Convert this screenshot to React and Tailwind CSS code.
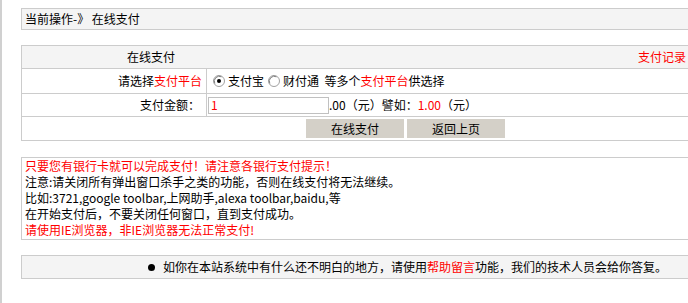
const font = { fontFamily: '"Noto Sans CJK SC", "Liberation Sans", sans-serif' };

function Radio({ checked }) {
  return (
    <svg width="12" height="12" viewBox="0 0 12 12" className="shrink-0">
      <circle cx="6" cy="6" r="5.5" fill="#fff" stroke="#a0a0a0" />
      <path d="M1.8 8.5 A5 5 0 0 1 8.5 1.8" fill="none" stroke="#808080" strokeWidth="1" />
      {checked && <circle cx="6" cy="6" r="2" fill="#000" />}
    </svg>
  );
}

const Red = ({ children }) => <span className="text-[#ff0000]">{children}</span>;

export default function App() {
  return (
    <div className="w-[688px] h-[303px] overflow-hidden bg-white text-[12px] leading-[16px] text-black border-l-2 border-[#d0d0d0]" style={font}>
      <div className="pl-[19px] pt-[8px] w-[720px]">
        {/* current location */}
        <div className="w-[690px] h-[22px] border border-[#cccccc] bg-[#f4f4f4] flex items-center pl-[3px]">
          当前操作-》 在线支付
        </div>

        {/* payment table */}
        <div className="mt-[15px] w-[672px] border border-[#cccccc]">
          <div className="h-[23px] bg-[#f4f4f4] border-b border-[#cccccc] flex items-center">
            <div className="pl-[105px] flex-1">在线支付</div>
            <div className="pr-[6px]"><Red>支付记录</Red></div>
          </div>
          <div className="h-[25px] border-b border-[#cccccc] flex">
            <div className="w-[185px] border-r border-[#cccccc] flex items-center justify-end pr-[4px]">
              请选择<Red>支付平台</Red>
            </div>
            <div className="flex items-center pl-[6px]">
              <Radio checked />
              <span className="ml-[3px]">支付宝</span>
              <span className="ml-[4px]"><Radio /></span>
              <span className="ml-[3px]">财付通&nbsp; 等多个<Red>支付平台</Red>供选择</span>
            </div>
          </div>
          <div className="h-[23px] border-b border-[#cccccc] flex">
            <div className="w-[185px] border-r border-[#cccccc] flex items-center justify-end pr-[6px]">
              支付金额：
            </div>
            <div className="flex items-center pl-[1px]">
              <div className="w-[121px] h-[17px] border border-[#c0c0c0] bg-white flex items-center pl-[2px]">
                <Red>1</Red>
              </div>
              <span>.00（元）譬如：<Red>1.00</Red>（元）</span>
            </div>
          </div>
          <div className="h-[23px] flex items-center pl-[284px] gap-[3px]">
            <div className="w-[98px] h-[19px] bg-[#d4d0c8] flex items-center justify-center">在线支付</div>
            <div className="w-[98px] h-[19px] bg-[#d4d0c8] flex items-center justify-center">返回上页</div>
          </div>
        </div>

        {/* notes */}
        <div className="mt-[16px] w-[690px] border border-[#cccccc] pl-[3px] pb-[1px]">
          <div><Red>只要您有银行卡就可以完成支付！请注意各银行支付提示！</Red></div>
          <div>注意:请关闭所有弹出窗口杀手之类的功能，否则在线支付将无法继续。</div>
          <div>比如:3721,google toolbar,上网助手,alexa toolbar,baidu,等</div>
          <div>在开始支付后，不要关闭任何窗口，直到支付成功。</div>
          <div><Red>请使用IE浏览器，非IE浏览器无法正常支付!</Red></div>
        </div>

        {/* help */}
        <div className="mt-[15px] w-[690px] h-[24px] border border-[#cccccc] bg-[#f4f4f4] flex items-center pl-[126px]">
          <span className="w-[7px] h-[7px] rounded-full bg-black mr-[8px]" />
          <span>如你在本站系统中有什么还不明白的地方，请使用<Red>帮助留言</Red>功能，我们的技术人员会给你答复。</span>
        </div>
      </div>
    </div>
  );
}
